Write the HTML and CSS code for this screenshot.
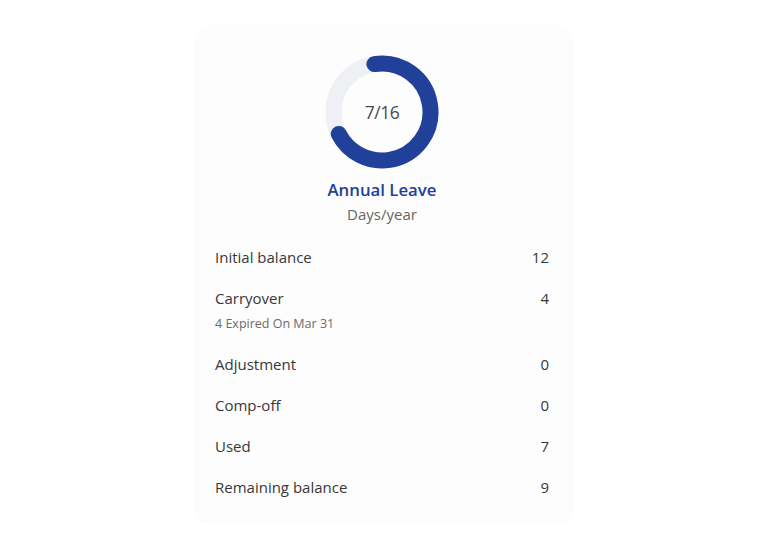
FILE: index.html
```html
<!DOCTYPE html>
<html lang="en">
<head>
    <meta charset="UTF-8">
    <meta name="viewport" content="width=device-width, initial-scale=1.0">
    <title>Leave Balance</title>
    <link rel="stylesheet" href="styles.css">
</head>
<body>

<div class="card">
    <div class="chart">
        <svg width="114" height="114" viewBox="0 0 114 114">
            <circle class="track" cx="57" cy="57" r="48.5"></circle>
            <!-- used arc, starts at the top and runs clockwise -->
            <circle class="used" cx="57" cy="57" r="48.5"
                    stroke-dasharray="213 400" transform="rotate(-99 57 57)"></circle>
        </svg>
        <span class="chart-value">7/16</span>
    </div>
    <h2 class="leave-title">Annual Leave</h2>
    <p class="leave-unit">Days/year</p>

    <ul class="balance-list">
        <li class="balance-row">
            <span>Initial balance</span>
            <span>12</span>
        </li>
        <li class="balance-row">
            <div>
                <span>Carryover</span>
                <div class="row-note">4 Expired On Mar 31</div>
            </div>
            <span>4</span>
        </li>
        <li class="balance-row">
            <span>Adjustment</span>
            <span>0</span>
        </li>
        <li class="balance-row">
            <span>Comp-off</span>
            <span>0</span>
        </li>
        <li class="balance-row">
            <span>Used</span>
            <span>7</span>
        </li>
        <li class="balance-row">
            <span>Remaining balance</span>
            <span>9</span>
        </li>
    </ul>
</div>

</body>
</html>
```

FILE: styles.css
```css
body {
    font-family: "Open Sans", "Liberation Sans", Arial, sans-serif;
    background-color: #ffffff;
    color: #3a3a3a;
    margin: 0;
    padding: 26px 0 0 197px;
}
.card {
    width: 334px;
    padding: 29px 21px 14px 18px;
    background-color: #fdfdfd;
    border-radius: 16px;
    box-shadow: 0 1px 6px rgba(0, 0, 0, 0.04);
}
.chart {
    position: relative;
    width: 114px;
    height: 114px;
    margin: 0 auto;
}
.chart svg {
    display: block;
}
.track {
    fill: none;
    stroke: #eff0f3;
    stroke-width: 16;
}
.used {
    fill: none;
    stroke: #21409a;
    stroke-width: 16;
    stroke-linecap: round;
}
.chart-value {
    position: absolute;
    top: 0;
    left: 0;
    width: 100%;
    line-height: 114px;
    text-align: center;
    font-size: 17.5px;
    letter-spacing: -0.5px;
    color: #4a4a4a;
}
.leave-title {
    margin: 11px 0 0;
    text-align: center;
    font-size: 16.8px;
    line-height: 20px;
    font-weight: 600;
    color: #21409a;
}
.leave-unit {
    margin: 4px 0 0;
    text-align: center;
    font-size: 15px;
    line-height: 20px;
    color: #666;
}
.balance-list {
    list-style: none;
    margin: 12.5px 0 0;
    padding: 0;
}
.balance-row {
    display: flex;
    justify-content: space-between;
    align-items: flex-start;
    padding: 10.5px 0;
    font-size: 15px;
    line-height: 20px;
    color: #383838;
}
.row-note {
    margin: 6.5px 0 1.5px;
    font-size: 12.5px;
    line-height: 17px;
    color: #6a6a6a;
}
```
